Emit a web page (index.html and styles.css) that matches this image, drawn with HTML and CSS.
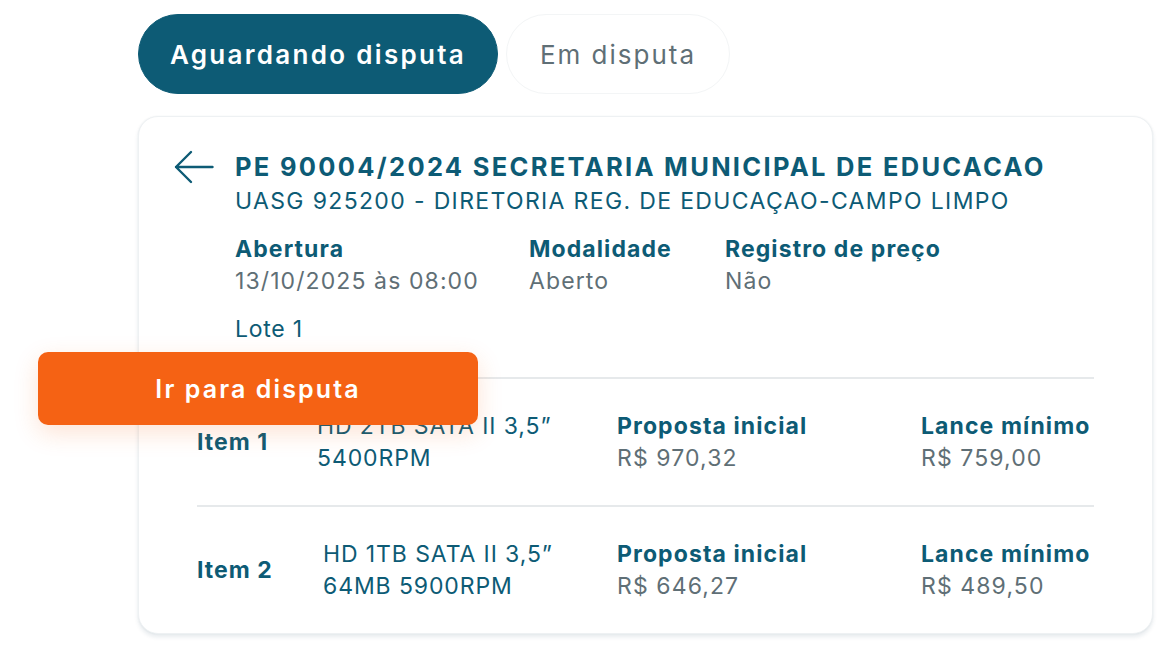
FILE: index.html
```html
<!DOCTYPE html>
<html lang="pt-BR">
<head>
<meta charset="utf-8">
<link rel="stylesheet" href="styles.css">
</head>
<body>
<div class="page">
  <div class="tabs">
    <div class="tab active">Aguardando disputa</div>
    <div class="tab">Em disputa</div>
  </div>
  <div class="card">
    <div class="head">
      <svg class="back" width="40" height="34" viewBox="0 0 40 34" fill="none" stroke="#0d5b75" stroke-width="2.4" stroke-linecap="round" stroke-linejoin="round"><path d="M38.5 17H2M17 2L2 17l15 15"/></svg>
      <div class="head-text">
        <div class="title">PE 90004/2024 SECRETARIA MUNICIPAL DE EDUCACAO</div>
        <div class="subtitle">UASG 925200 - DIRETORIA REG. DE EDUCAÇAO-CAMPO LIMPO</div>
        <div class="meta">
          <div class="meta-col c1"><div class="lbl">Abertura</div><div class="val">13/10/2025 às 08:00</div></div>
          <div class="meta-col c2"><div class="lbl">Modalidade</div><div class="val">Aberto</div></div>
          <div class="meta-col"><div class="lbl">Registro de preço</div><div class="val">Não</div></div>
        </div>
        <div class="lote">Lote 1</div>
      </div>
    </div>
    <div class="items">
      <div class="row">
        <div class="item-no">Item 1</div>
        <div class="desc">HD 2TB SATA II 3,5”<br>5400RPM</div>
        <div class="price p1"><div class="lbl">Proposta inicial</div><div class="val">R$ 970,32</div></div>
        <div class="price"><div class="lbl">Lance mínimo</div><div class="val">R$ 759,00</div></div>
      </div>
      <div class="row">
        <div class="item-no">Item 2</div>
        <div class="desc d2">HD 1TB SATA II 3,5”<br>64MB 5900RPM</div>
        <div class="price p1"><div class="lbl">Proposta inicial</div><div class="val">R$ 646,27</div></div>
        <div class="price"><div class="lbl">Lance mínimo</div><div class="val">R$ 489,50</div></div>
      </div>
    </div>
  </div>
  <div class="go">Ir para disputa</div>
</div>
</body>
</html>
```
FILE: styles.css
```css
* { box-sizing: border-box; }
html, body { margin: 0; padding: 0; background: #fff; }
body { font-family: Inter, "Noto Sans", sans-serif; color: #0d5b75; }
.page { position: relative; width: 1176px; height: 656px; padding: 14px 0 0 138px; }
.tabs { display: flex; gap: 8px; }
.tab {
  height: 80px; border-radius: 40px; display: flex; align-items: center; justify-content: center;
  font-size: 26px; letter-spacing: 2px; color: #5f6f76; width: 224px; border: 1px solid #f3f5f6;
}
.tab.active { width: 360px; background: #0d5b75; color: #fff; font-weight: 600; letter-spacing: 2.3px; border-color: #0d5b75; }
.card {
  margin-top: 22px; width: 1015px; height: 518px; border-radius: 20px; background: #fff;
  border: 1px solid #eef1f3;
  box-shadow: 0 3px 4px rgba(20, 60, 90, 0.10), 0 0 2px rgba(20, 60, 90, 0.06);
  padding: 33px 58px 0 35px;
}
.head { display: flex; }
.back { margin-top: 0; width: 40px; height: 34px; flex: none; margin-right: 21px; }
.head-text { flex: 1; }
.title { font-size: 25.5px; font-weight: 700; line-height: 34px; letter-spacing: 2.3px; white-space: nowrap; }
.subtitle { font-size: 23px; line-height: 34px; letter-spacing: 1.35px; white-space: nowrap; }
.meta { display: flex; margin-top: 15px; }
.meta-col.c1 { width: 294px; }
.meta-col.c2 { width: 196px; }
.lbl { font-size: 23px; font-weight: 700; line-height: 32px; letter-spacing: 1.1px; white-space: nowrap; }
.val { font-size: 23px; line-height: 32px; color: #5f6f76; letter-spacing: 1.1px; white-space: nowrap; }
.lote { font-size: 23px; line-height: 32px; margin-top: 16px; letter-spacing: 0.75px; }
.items { margin: 32px 0 0 23px; }
.row { display: flex; align-items: center; height: 128px; border-top: 2px solid #e6e9eb; }
.item-no { width: 120px; font-size: 23px; font-weight: 700; letter-spacing: 1px; }
.desc { width: 300px; font-size: 23px; line-height: 32px; letter-spacing: 0.9px; white-space: nowrap; }
.desc.d2 { padding-left: 6px; }
.price.p1 { width: 304px; }
.go {
  position: absolute; left: 38px; top: 352px; width: 440px; height: 73px; border-radius: 10px;
  background: #f56214; color: #fff; font-size: 25px; font-weight: 600; letter-spacing: 2.1px;
  display: flex; align-items: center; justify-content: center;
  box-shadow: 0 8px 24px rgba(245, 98, 20, 0.18);
}
```
